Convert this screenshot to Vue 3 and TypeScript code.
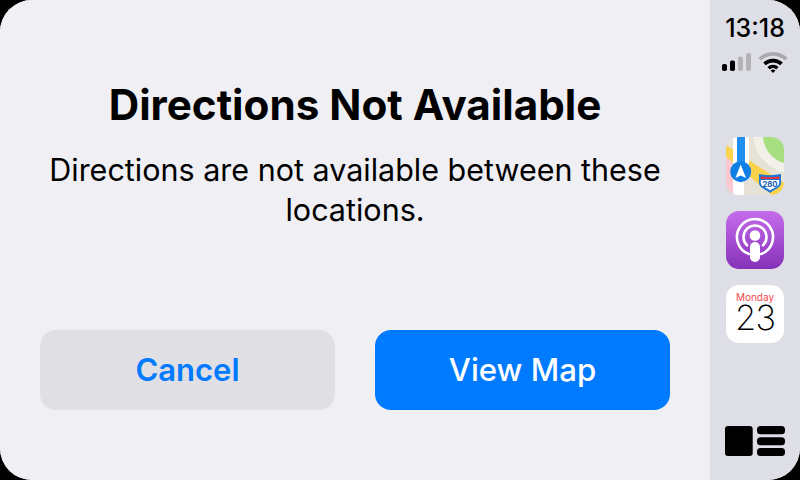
<script setup lang="ts">
const title = "Directions Not Available";
const message = "Directions are not available between these locations.";
</script>
<template>
  <div class="screen">
    <main class="alert">
      <h1 class="title">{{ title }}</h1>
      <p class="message">{{ message }}</p>
      <div class="actions">
        <button class="btn cancel">Cancel</button>
        <button class="btn primary">View Map</button>
      </div>
    </main>
    <aside class="dock">
      <div class="time">13:18</div>
      <div class="status">
        <svg width="29" height="18" viewBox="0 0 29 18">
          <rect x="0" y="11" width="5" height="7" rx="1.8" fill="#000" />
          <rect x="8" y="7.5" width="5" height="10.5" rx="1.8" fill="#000" />
          <rect x="16" y="3.5" width="5" height="14.5" rx="1.8" fill="#b4b4b8" />
          <rect x="24" y="0" width="5" height="18" rx="1.8" fill="#b4b4b8" />
        </svg>
        <svg width="30" height="22" viewBox="0 0 30 22">
          <path d="M0.5 6.8A21 21 0 0 1 29.5 6.8L27 9.6A17 17 0 0 0 3 9.6Z" fill="#a9a9ad" />
          <path d="M5.2 11.6A14.4 14.4 0 0 1 24.8 11.6L22.3 14.2A11 11 0 0 0 7.7 14.2Z" fill="#000" />
          <path d="M9.4 16A8.2 8.2 0 0 1 20.6 16L18.2 18.5A4.8 4.8 0 0 0 11.8 18.5Z" fill="#000" />
          <path d="M12.6 19.6A3.6 3.6 0 0 1 17.4 19.6L15 22Z" fill="#000" />
        </svg>
      </div>
      <div class="apps">
        <svg class="app" viewBox="0 0 58 58">
          <defs>
            <clipPath id="mapClip"><rect width="58" height="58" rx="13" /></clipPath>
          </defs>
          <g clip-path="url(#mapClip)">
            <rect width="58" height="58" fill="#e6e2d8" />
            <path d="M27 0H58V36C42 32 28 17 27 0Z" fill="#a6de80" />
            <path d="M27 0H37C38 12 46 23 58 26V36C42 32 28 17 27 0Z" fill="#f2f0e8" />
            <path d="M0 8L58 46V58H46L0 20Z" fill="#fbd24c" />
            <path d="M0 20L7 26V58H0Z" fill="#fcc8cf" />
            <rect x="7" y="24" width="11" height="34" fill="#fff" />
            <rect x="7" y="0" width="16" height="30" fill="#fff" />
            <rect x="11" y="0" width="8" height="30" fill="#1f8ff0" />
          </g>
          <circle cx="14.7" cy="34.7" r="10.5" fill="#0f7fe6" />
          <path d="M14.7 27.5L20 41L14.7 38.5L9.4 41Z" fill="#fff" />
          <path d="M33 37C40 38.5 48 38.5 55 37V46C55 51 48 52 44 56C40 52 33 51 33 46Z" fill="#1b74d8" />
          <path d="M34.8 39.4C41 40.5 47 40.5 53.2 39.4V42H34.8Z" fill="#e6333a" />
          <path d="M34.8 43H53.2V46C53.2 50 47 50.5 44 53.6C41 50.5 34.8 50 34.8 46Z" fill="#fff" />
          <text x="44" y="49.6" text-anchor="middle" class="shield">280</text>
        </svg>
        <svg class="app" viewBox="0 0 58 58">
          <defs>
            <linearGradient id="pod" x1="0" y1="0" x2="0" y2="1">
              <stop offset="0" stop-color="#c56cec" />
              <stop offset="1" stop-color="#8532b8" />
            </linearGradient>
          </defs>
          <rect width="58" height="58" rx="13" fill="url(#pod)" />
          <path d="M23 43A18 18 0 1 1 35 43" fill="none" stroke="#fff" stroke-width="2.6" stroke-linecap="round" />
          <path d="M21 34.3A11.5 11.5 0 1 1 37 34.3" fill="none" stroke="#fff" stroke-width="2.6" stroke-linecap="round" />
          <circle cx="29" cy="24.5" r="5.3" fill="#fff" />
          <rect x="24" y="31" width="10" height="20" rx="5" fill="#fff" />
        </svg>
        <div class="calendar">
          <span class="cal-day">Monday</span>
          <span class="cal-date">23</span>
        </div>
      </div>
      <svg class="home" width="60" height="30" viewBox="0 0 60 30">
        <rect x="0" y="0" width="27.7" height="30" rx="3" fill="#000" />
        <rect x="32" y="0" width="28" height="8.3" rx="3.5" fill="#000" />
        <rect x="32" y="11.2" width="28" height="8" rx="3.5" fill="#000" />
        <rect x="32" y="22" width="28" height="8" rx="3.5" fill="#000" />
      </svg>
    </aside>
  </div>
</template>
<style scoped>
.screen {
  width: 800px;
  height: 480px;
  display: flex;
  overflow: hidden;
  border-radius: 32px;
  background: #efeff4;
  font-family: Inter, "Liberation Sans", sans-serif;
}
.alert {
  width: 710px;
  flex: none;
  box-sizing: border-box;
  padding: 81px 40px 70px;
  display: flex;
  flex-direction: column;
  align-items: center;
  background: #efeff4;
}
.title {
  margin: 0;
  font-size: 42.2px;
  line-height: 48px;
  font-weight: 700;
  color: #000;
}
.message {
  margin: 21px 0 0;
  width: 630px;
  font-size: 30.5px;
  line-height: 40px;
  text-align: center;
  color: #000;
}
.actions {
  margin-top: auto;
  display: flex;
  gap: 40px;
  width: 100%;
}
.btn {
  flex: 1;
  height: 80px;
  border: none;
  border-radius: 16px;
  font-family: inherit;
  font-size: 31.2px;
  font-weight: 500;
  padding: 0 0 1px;
}
.cancel {
  background: #dfdfe4;
  color: #007aff;
  font-size: 31px;
  font-weight: 600;
}
.primary {
  background: #007aff;
  color: #fff;
}
.dock {
  width: 90px;
  flex: none;
  display: flex;
  flex-direction: column;
  align-items: center;
  background: #dedee6;
  padding-top: 14px;
  box-sizing: border-box;
}
.time {
  font-size: 25px;
  line-height: 28px;
  font-weight: 500;
  color: #000;
}
.status {
  display: flex;
  align-items: center;
  gap: 7px;
  margin-top: 8px;
  height: 24px;
}
.apps {
  margin-top: 63px;
  display: flex;
  flex-direction: column;
  gap: 16px;
}
.app {
  display: block;
  width: 58px;
  height: 58px;
}
.shield {
  font-size: 7.8px;
  font-weight: 700;
  fill: #1b5fb4;
  font-family: Inter, sans-serif;
}
.calendar {
  width: 58px;
  height: 58px;
  border-radius: 13px;
  background: #fff;
  display: flex;
  flex-direction: column;
  align-items: center;
}
.cal-day {
  font-size: 10px;
  line-height: 12px;
  margin-top: 6px;
  color: #f4484a;
}
.cal-date {
  font-size: 34.5px;
  line-height: 30px;
  font-weight: 200;
  letter-spacing: -1px;
  color: #000;
}
.home {
  margin-top: auto;
  margin-bottom: 24px;
}
</style>
<style>
html, body {
  background: #000;
}
</style>
